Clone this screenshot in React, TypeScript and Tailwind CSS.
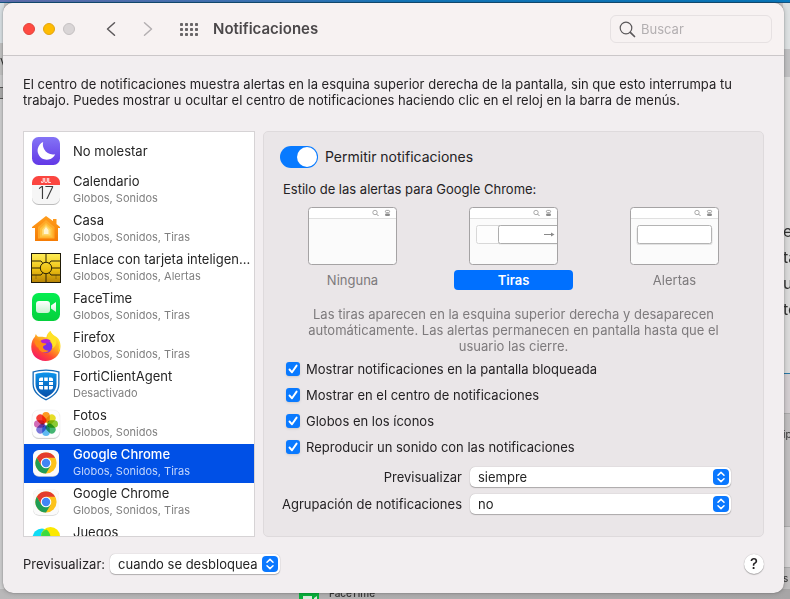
import { useState } from "react"
import type { ReactNode } from "react"

function MoonIcon() {
  return (
    <svg viewBox="0 0 30 30" className="size-[30px]">
      <defs>
        <linearGradient id="moon" x1="0" y1="0" x2="0" y2="1">
          <stop offset="0" stopColor="#8474f6" />
          <stop offset="1" stopColor="#6238e6" />
        </linearGradient>
      </defs>
      <rect x="1" y="1" width="28" height="28" rx="6.5" fill="url(#moon)" />
      <path d="M12.2 6A10 10 0 0 0 24.2 18.2A9.2 9.2 0 1 1 12.2 6Z" fill="#fff" />
    </svg>
  )
}

function CalendarIcon() {
  return (
    <svg viewBox="0 0 30 30" className="size-[30px] font-['Inter',sans-serif]">
      <rect x="1" y="1.8" width="28" height="28.2" rx="6.5" fill="#bdbdbd" />
      <rect x="1" y="1" width="28" height="28" rx="6.5" fill="#f6f6f6" />
      <path d="M1 10V7.5A6.500 6.500 0 0 1 7.500 1H22.500A6.500 6.500 0 0 1 29 7.500V10Z" fill="#fb4640" />
      <text x="15" y="7.800" textAnchor="middle" fontSize="5.500" fontWeight="700" fill="#fff">JUL</text>
      <text x="15" y="24" textAnchor="middle" fontSize="17" fontWeight="300" fill="#3c3c3c">17</text>
    </svg>
  )
}

function HomeIcon() {
  return (
    <svg viewBox="0 0 30 30" className="size-[30px]">
      <defs>
        <linearGradient id="home" x1="0" y1="0" x2="0" y2="1">
          <stop offset="0" stopColor="#ff9d1c" />
          <stop offset="1" stopColor="#f57c05" />
        </linearGradient>
      </defs>
      <path d="M15 2L22 7V5H25.500V10L29 13V14H27V27H4V14H1V13Z" fill="url(#home)" />
      <path d="M15 6L23.500 13V24.500H7V13Z" fill="#ffa928" />
      <path d="M15 9L21.500 14.500V23.500H9V14.500Z" fill="#ffc03d" />
      <path d="M15 11L19.500 15.500V21.500H11V15.500Z" fill="#ffd86d" />
      <path d="M15 13L17.500 16V20H12.800V16Z" fill="#fff5d2" />
    </svg>
  )
}

function ChipIcon() {
  return (
    <svg viewBox="0 0 30 30" className="size-[30px]">
      <defs>
        <linearGradient id="chip" x1="0" y1="0" x2="0" y2="1">
          <stop offset="0" stopColor="#ffee58" />
          <stop offset="0.55" stopColor="#eec112" />
          <stop offset="1" stopColor="#b68205" />
        </linearGradient>
      </defs>
      <rect x="0.500" y="0.500" width="29" height="29" fill="url(#chip)" stroke="#1e1a08" />
      <g stroke="#2e2506" fill="none">
        <path d="M0 8H10L12 10.500M30 8H20L18 10.500M15 0V9M0 15H9.500M20.500 15H30M0 22H10L12 19.500M30 22H20L18 19.500M15 21V30" />
        <path d="M5 22V26M25 22V26" opacity="0.3" />
        <circle cx="15" cy="15" r="5.700" />
      </g>
    </svg>
  )
}

function FaceTimeIcon() {
  return (
    <svg viewBox="0 0 30 30" className="size-[30px]">
      <defs>
        <linearGradient id="facetime" x1="0" y1="0" x2="0" y2="1">
          <stop offset="0" stopColor="#05ee50" />
          <stop offset="1" stopColor="#05cf3c" />
        </linearGradient>
        <linearGradient id="camera" x1="0" y1="0" x2="0" y2="1">
          <stop offset="0" stopColor="#fff" />
          <stop offset="1" stopColor="#c9f2d2" />
        </linearGradient>
      </defs>
      <rect x="1" y="1" width="28" height="28" rx="6.500" fill="url(#facetime)" />
      <rect x="5" y="9" width="14" height="12" rx="3" fill="url(#camera)" />
      <path d="M20 13.500L25 10V20L20 16.500Z" fill="url(#camera)" />
    </svg>
  )
}

function FirefoxIcon() {
  return (
    <svg viewBox="0 0 31 31" className="size-[30px]">
      <defs>
        <linearGradient id="fox" x1="0.850" y1="0.050" x2="0.250" y2="1">
          <stop offset="0" stopColor="#fff03b" />
          <stop offset="0.400" stopColor="#ffac1e" />
          <stop offset="0.700" stopColor="#ff4a32" />
          <stop offset="1" stopColor="#f5156c" />
        </linearGradient>
      </defs>
      <path d="M20 0C22 5 28 7 30 14C32 24 24 31 15 31C6 31 0 24.500 0.300 16C0.500 11 2 8 4 6L5 3C6 5 7 6 9 6C11 5.500 14 6.500 16 6.500C16 4 18 1.500 20 0Z" fill="url(#fox)" />
      <path d="M20 0C18 2 16.500 4.500 17 8C21 10 23 13 22 18C27 15 27 10 25 7.500C29 10 30 16 28 22C33 14 29 8 26 6C23 4 21 3 20 0Z" fill="#ffe226" />
      <circle cx="15.500" cy="16" r="6.500" fill="#7b2ee8" />
      <path d="M10 10C13 8 18 7 21 11C19 10 18 11 18.500 13C16 11 13 13 10 14Z" fill="#b51fd4" />
      <path d="M3.500 10C7 9 10 10 11.500 12.500L16 13C16 14.500 13 15 12.500 16C12 18 14 20 18.500 20.500C16 23 9 23 7.500 17C6 17 4 14 3.500 10Z" fill="#ff8b16" />
    </svg>
  )
}

function FortiClientIcon() {
  return (
    <svg viewBox="0 0 30 32" className="h-8 w-[30px]">
      <defs>
        <linearGradient id="forti" x1="0" y1="0" x2="0" y2="1">
          <stop offset="0" stopColor="#0c94ec" />
          <stop offset="1" stopColor="#0850a8" />
        </linearGradient>
      </defs>
      <path d="M15 0.500C19 0.500 25 1.300 28.500 2.500V15C28.500 24 21 28.500 15 31.500C9 28.500 1.500 24 1.500 15V2.500C5 1.300 11 0.500 15 0.500Z" fill="#1269b8" />
      <path d="M15 1.800C19 1.800 24 2.500 27.200 3.500V15C27.200 23 20.500 27.500 15 30C9.500 27.500 2.800 23 2.800 15V3.500C6 2.500 11 1.800 15 1.800Z" fill="#fff" />
      <path d="M15 3.500C18 3.500 22.500 4 25.500 5V15C25.500 22 19.500 26 15 28.300C10.500 26 4.500 22 4.500 15V5C7.500 4 12 3.500 15 3.500Z" fill="url(#forti)" />
      <g fill="#fff">
        <path d="M10 8.500H12V12H8V10.500A2 2 0 0 1 10 8.500ZM13.200 8.500H16.800V12H13.200ZM18 8.500H20A2 2 0 0 1 22 10.500V12H18Z" />
        <path d="M8 13H12V16H8ZM18 13H22V16H18Z" />
        <path d="M8 17H12V20.500H10A2 2 0 0 1 8 18.500ZM13.200 17H16.800V20.500H13.200ZM18 17H22V18.500A2 2 0 0 1 20 20.500H18Z" />
      </g>
    </svg>
  )
}

const petals = ["#ff8f0a", "#e6dc10", "#7fc71f", "#2fae63", "#4fb4f2", "#6f6ad8", "#cf5cb0", "#f5281f"]

function PhotosIcon() {
  return (
    <svg viewBox="0 0 30 30" className="size-[30px]">
      <rect x="1" y="1.800" width="28" height="28.200" rx="6.500" fill="#c9c9c9" />
      <rect x="1" y="1" width="28" height="28" rx="6.500" fill="#fdfdfd" stroke="#e9e9e9" strokeWidth="0.500" />
      {petals.map((color, i) => (
        <rect
          key={color}
          x="11.200"
          y="3"
          width="7.600"
          height="10.800"
          rx="3.800"
          fill={color}
          fillOpacity="0.900"
          className="mix-blend-multiply"
          transform={`rotate(${i * 45} 15 15)`}
        />
      ))}
      <circle cx="15" cy="15" r="1.300" fill="#fff" />
    </svg>
  )
}

function ChromeIcon() {
  return (
    <svg viewBox="0 0 30 30" className="size-[30px]">
      <rect x="2" y="2.600" width="26" height="26.200" rx="6" fill="#d4d4d4" />
      <rect x="2" y="2" width="26" height="26" rx="6" fill="#fafafa" />
      <circle cx="15" cy="15" r="10.600" fill="#fcc21b" />
      <path d="M5.820 9.700A10.600 10.600 0 0 1 24.180 9.700L15 9.700L10.400 17.650Z" fill="#e33b2e" />
      <path d="M5.820 9.700A10.600 10.600 0 0 0 15 25.600L19.600 17.650L10.400 17.650Z" fill="#1f9d55" />
      <circle cx="15" cy="15" r="5.300" fill="#fff" />
      <circle cx="15" cy="15" r="4.200" fill="#4285f4" />
    </svg>
  )
}

function GamesIcon() {
  return (
    <svg viewBox="0 0 30 30" className="size-[30px]">
      <circle cx="11" cy="12" r="9.500" fill="#0fdcf5" />
      <circle cx="19.500" cy="10.500" r="9.500" fill="#fbe800" />
      <path d="M15.500 3.600A9.500 9.500 0 0 1 15.500 19A9.500 9.500 0 0 1 11 6.500A9.500 9.500 0 0 1 15.500 3.600Z" fill="#3bdb3f" />
    </svg>
  )
}

type AppRow = { name: string; detail?: string; icon: ReactNode }

const apps: AppRow[] = [
  { name: "No molestar", icon: <MoonIcon /> },
  { name: "Calendario", detail: "Globos, Sonidos", icon: <CalendarIcon /> },
  { name: "Casa", detail: "Globos, Sonidos, Tiras", icon: <HomeIcon /> },
  { name: "Enlace con tarjeta inteligen...", detail: "Globos, Sonidos, Alertas", icon: <ChipIcon /> },
  { name: "FaceTime", detail: "Globos, Sonidos, Tiras", icon: <FaceTimeIcon /> },
  { name: "Firefox", detail: "Globos, Sonidos, Tiras", icon: <FirefoxIcon /> },
  { name: "FortiClientAgent", detail: "Desactivado", icon: <FortiClientIcon /> },
  { name: "Fotos", detail: "Globos, Sonidos", icon: <PhotosIcon /> },
  { name: "Google Chrome", detail: "Globos, Sonidos, Tiras", icon: <ChromeIcon /> },
  { name: "Google Chrome", detail: "Globos, Sonidos, Tiras", icon: <ChromeIcon /> },
  { name: "Juegos", detail: "Globos, Sonidos", icon: <GamesIcon /> },
]

function AppList() {
  const [selected, setSelected] = useState(8)
  return (
    <ul className="h-[406px] w-[232px] shrink-0 overflow-hidden border border-[#d6d3d5] bg-white">
      {apps.map((app, i) => (
        <li key={i}>
          <button
            type="button"
            onClick={() => setSelected(i)}
            className={`flex h-[39px] w-full items-center gap-3 pl-[7px] text-left ${i === selected ? "bg-[#0050e6] text-white" : "text-[#242424]"}`}
          >
            <span className="flex w-[30px] shrink-0 justify-center pb-px">{app.icon}</span>
            <span className="min-w-0 flex-1 pb-px">
              <span className={`block truncate leading-4 ${i === selected ? "font-medium" : ""}`}>{app.name}</span>
              {app.detail && (
                <span className={`block text-[11px] leading-[18px] ${i === selected ? "text-[#c3d5fb]" : "text-[#808080]"}`}>{app.detail}</span>
              )}
            </span>
          </button>
        </li>
      ))}
    </ul>
  )
}

function StylePreview({ kind }: { kind: string }) {
  return (
    <svg viewBox="0 0 89 58" className="h-[58px] w-[89px]" fill="none">
      <rect x="0.500" y="0.500" width="88" height="57" rx="3" fill="#fbfbfb" />
      <path d="M1 12V3.500A3 3 0 0 1 3.500 1H85.500A3 3 0 0 1 88 3.500V12Z" fill="#fff" />
      <path d="M1 11.500H88" stroke="#e0e0e0" />
      <circle cx="67" cy="5.500" r="2.200" stroke="#8a8a8a" strokeWidth="0.700" />
      <path d="M68.600 7.100L70.500 9" stroke="#8a8a8a" strokeWidth="0.900" />
      <rect x="77.400" y="3.400" width="4.200" height="2.200" rx="1.100" stroke="#8a8a8a" strokeWidth="0.800" />
      <rect x="77" y="6.400" width="5" height="2.700" rx="1.300" fill="#8a8a8a" />
      {kind === "Tiras" && (
        <>
          <rect x="7.500" y="18.500" width="40" height="18" rx="2" fill="#fdfdfd" stroke="#d8d8d8" />
          <path d="M88 20H30V37.500H88Z" fill="#e4e4e4" />
          <path d="M88 18.500H31.500A2 2 0 0 0 29.500 20.500V34.500A2 2 0 0 0 31.500 36.500H88" fill="#fff" stroke="#adadad" />
          <path d="M75 27.500H83" stroke="#8a8a8a" />
          <path d="M82 25.500L85.500 27.500L82 29.500Z" fill="#8a8a8a" />
        </>
      )}
      {kind === "Alertas" && (
        <>
          <rect x="6.500" y="19.500" width="76" height="18.500" rx="2.500" fill="#e2e2e2" />
          <rect x="7.500" y="18.500" width="74" height="18" rx="2" fill="#fff" stroke="#b4b4b4" />
        </>
      )}
      <rect x="0.500" y="0.500" width="88" height="57" rx="3" stroke="#a5a3a4" />
    </svg>
  )
}

function CheckRow({ label }: { label: string }) {
  return (
    <label className="flex h-[26px] items-center gap-1.5">
      <span className="relative flex size-3.5 shrink-0">
        <input type="checkbox" defaultChecked className="peer size-3.5 appearance-none rounded-[3px] bg-white shadow-sm checked:bg-[#0a7aff]" />
        <svg viewBox="0 0 14 14" className="pointer-events-none absolute inset-0 hidden size-3.5 peer-checked:block" fill="none">
          <path d="M3.500 7.500L6 10.300L10.600 3.600" stroke="#fff" strokeWidth="1.900" strokeLinecap="round" strokeLinejoin="round" />
        </svg>
      </span>
      {label}
    </label>
  )
}

function PopUp({ id, value, options }: { id: string; value: string; options: string[] }) {
  return (
    <span className="relative flex">
      <select
        id={id}
        defaultValue={value}
        className="h-5 w-full appearance-none rounded-[5px] bg-white pr-[22px] pl-2 leading-5 text-[#242424] shadow-[0_0_1px_#00000055,0_1px_1px_#00000040]"
      >
        {options.map((o) => (
          <option key={o}>{o}</option>
        ))}
      </select>
      <svg viewBox="0 0 16 16" className="pointer-events-none absolute top-0.5 right-0.5 size-4" fill="none">
        <rect width="16" height="16" rx="4" fill="#0a78ff" />
        <path d="M5 6.300L8 3.400L11 6.300M5 9.700L8 12.600L11 9.700" stroke="#fff" strokeWidth="1.500" strokeLinecap="round" strokeLinejoin="round" />
      </svg>
    </span>
  )
}

function SettingsPanel() {
  const [style, setStyle] = useState("Tiras")
  return (
    <section className="min-w-0 flex-1 rounded-[5px] border border-[#dedadc] bg-[#eae6e8] px-2 pt-3.5">
      <label className="flex items-center gap-[7px] pl-2 text-sm leading-[22px]">
        <input
          type="checkbox"
          role="switch"
          defaultChecked
          className="h-[22px] w-[38px] appearance-none rounded-full bg-[#bbb] p-px before:block before:size-5 before:rounded-full before:bg-white checked:bg-[#087aff] checked:before:ml-4"
        />
        Permitir notificaciones
      </label>
      <fieldset>
        <legend className="pt-[13px] pl-[11px] leading-4">Estilo de las alertas para Google Chrome:</legend>
        <div className="mt-2.5 grid grid-cols-3">
          {["Ninguna", "Tiras", "Alertas"].map((kind) => (
            <label key={kind} className="flex flex-col items-center gap-[5px]">
              <input type="radio" name="style" checked={style === kind} onChange={() => setStyle(kind)} className="sr-only" />
              <StylePreview kind={kind} />
              <span className={`w-[119px] rounded-[4px] text-center leading-5 ${style === kind ? "bg-[#0070ff] font-semibold text-white" : "text-[#7d7a7c]"}`}>
                {kind}
              </span>
            </label>
          ))}
        </div>
      </fieldset>
      <p className="mx-auto mt-4 max-w-[430px] text-center leading-4 text-[#7d7a7c]">
        Las tiras aparecen en la esquina superior derecha y desaparecen automáticamente. Las alertas permanecen en pantalla hasta que el usuario las cierre.
      </p>
      <div className="mt-0.5 pl-3.5">
        <CheckRow label="Mostrar notificaciones en la pantalla bloqueada" />
        <CheckRow label="Mostrar en el centro de notificaciones" />
        <CheckRow label="Globos en los íconos" />
        <CheckRow label="Reproducir un sonido con las notificaciones" />
      </div>
      <div className="mt-[7px] grid grid-cols-[190px_1fr] items-center gap-x-2 gap-y-[7px] pr-6 text-right">
        <label htmlFor="preview">Previsualizar</label>
        <PopUp id="preview" value="siempre" options={["siempre", "cuando se desbloquea", "nunca"]} />
        <label htmlFor="grouping">Agrupación de notificaciones</label>
        <PopUp id="grouping" value="no" options={["no", "automático", "por app"]} />
      </div>
    </section>
  )
}

/* Slivers of the other windows that show around the edges */
function Desktop() {
  return (
    <div aria-hidden="true" className="absolute inset-0 overflow-hidden bg-[#c9c7c8] text-[#333]">
      <div className="absolute top-0 bottom-0 left-0 w-1 bg-[#cfcfd0]">
        <div className="mt-[3px] h-10 bg-[#d9e0e4]" />
        <div className="h-8 overflow-hidden bg-[#c2c2c2] pt-3 text-xs">V</div>
        <div className="mt-3 h-3 border-y border-[#555] bg-[#aaa]" />
      </div>
      <div className="absolute top-0 right-0 bottom-0 w-[7px] overflow-hidden bg-[#bfbdbe]">
        <div className="h-[49px] bg-[#dde1e2]" />
        <div className="h-7 bg-[#c0c0c2]" />
        <div className="h-[297px] border-b border-[#2777a5] bg-[#dadada] pt-[141px] text-base leading-[26px]">
          <p>e</p>
          <p>ta</p>
          <p>ur</p>
          <p>to</p>
        </div>
        <div className="h-10 border-b border-[#aaa] bg-[#d2cdd0]" />
        <div className="h-[112px] pt-3 text-[10px]">ip</div>
        <div className="h-[42px] border-y border-[#aaa] bg-[#d5d3d4]" />
        <p className="pt-0.5 text-[10px]">s</p>
      </div>
      <div className="absolute top-0 right-0 left-0 h-[3px] border-b border-[#15547f] bg-linear-to-r from-[#6170b0] via-[#147abf] to-[#0879be]" />
      <div className="absolute right-0 bottom-0 left-0 flex h-2.5 gap-2.5 bg-linear-to-r from-[#b9b8b9] to-[#a7a5a6] pl-[299px] text-[10px] leading-[8px] font-medium">
        <svg viewBox="0 0 20 10" className="h-2.5 w-5">
          <path d="M0 10V4A4 4 0 0 1 4 0H16A4 4 0 0 1 20 4V10Z" fill="#09b13c" />
          <path d="M4 10V7H13V10M15 9L18 7V10H15Z" fill="#d7eadb" />
        </svg>
        <span>FaceTime</span>
      </div>
    </div>
  )
}

function TitleBar() {
  return (
    <header className="flex h-[53px] items-center rounded-t-[10px] border-b border-[#cbc7c9] bg-[#f7f2f2] pr-3 pl-5">
      <div className="flex gap-2">
        <button type="button" aria-label="Cerrar" className="size-3 rounded-full border border-[#e0443c] bg-[#ff4a42]" />
        <button type="button" aria-label="Minimizar" className="size-3 rounded-full border border-[#e2a410] bg-[#febc02]" />
        <button type="button" aria-label="Ampliar" className="size-3 rounded-full border border-[#c5c1c2] bg-[#d9d5d6]" />
      </div>
      <button type="button" aria-label="Atrás" className="ml-7">
        <svg viewBox="0 0 16 16" className="size-4" fill="none" stroke="#5b585a" strokeWidth="1.500" strokeLinecap="round" strokeLinejoin="round">
          <path d="M11.500 1.800L4.500 8L11.500 14.200" />
        </svg>
      </button>
      <button type="button" aria-label="Adelante" className="ml-[21px]">
        <svg viewBox="0 0 16 16" className="size-4" fill="none" stroke="#b3afb1" strokeWidth="1.500" strokeLinecap="round" strokeLinejoin="round">
          <path d="M4.500 1.800L11.500 8L4.500 14.200" />
        </svg>
      </button>
      <button type="button" aria-label="Mostrar todo" className="mr-[15px] ml-6">
        <svg viewBox="0 0 18 13" className="h-[13px] w-[18px]" fill="#686567">
          {[0, 5, 10].map((y) =>
            [0, 5, 10, 15].map((x) => <rect key={`${x}-${y}`} x={x} y={y} width="3" height="3" rx="0.800" />)
          )}
        </svg>
      </button>
      <h1 className="text-[15px] font-semibold text-[#4b484a]">Notificaciones</h1>
      <label className="ml-auto flex h-7 w-[162px] items-center gap-[5px] rounded-md border border-[#e6e1e2] pl-2">
        <svg viewBox="0 0 17 17" className="size-[17px] shrink-0" fill="none" stroke="#5b585a" strokeLinecap="round">
          <circle cx="7" cy="7" r="5.800" strokeWidth="1.200" />
          <path d="M11.300 11.300L15.500 15.500" strokeWidth="1.700" />
        </svg>
        <input type="search" aria-label="Buscar" placeholder="Buscar" className="w-full min-w-0 bg-transparent text-[13px] outline-none placeholder:text-[#b3afb1]" />
      </label>
    </header>
  )
}

export default function App() {
  return (
    <div className="relative min-h-screen pt-[3px] pr-1.5 pb-1.5 pl-[3px] font-['Inter',sans-serif] text-[13px] leading-4 text-[#242224]">
      <Desktop />
      <main className="relative rounded-[10px] bg-[#f2eef0] shadow-[0_0_1px_#00000080,0_0_5px_#00000040]">
        <TitleBar />
        <div className="px-5 pt-5 pb-[19px]">
          <p className="max-w-[720px]">
            El centro de notificaciones muestra alertas en la esquina superior derecha de la pantalla, sin que esto interrumpa tu trabajo. Puedes mostrar u ocultar el centro de notificaciones haciendo clic en el reloj en la barra de menús.
          </p>
          <div className="mt-[23px] flex gap-2">
            <AppList />
            <SettingsPanel />
          </div>
          <footer className="mt-[17px] flex items-center gap-[5px]">
            <label htmlFor="lock-preview">Previsualizar:</label>
            <PopUp id="lock-preview" value="cuando se desbloquea" options={["siempre", "cuando se desbloquea", "nunca"]} />
            <button type="button" aria-label="Ayuda" className="ml-auto size-5 rounded-full bg-white text-[15px] leading-5 font-medium shadow-[0_0_1px_#00000055,0_1px_1px_#00000040]">
              ?
            </button>
          </footer>
        </div>
      </main>
    </div>
  )
}
